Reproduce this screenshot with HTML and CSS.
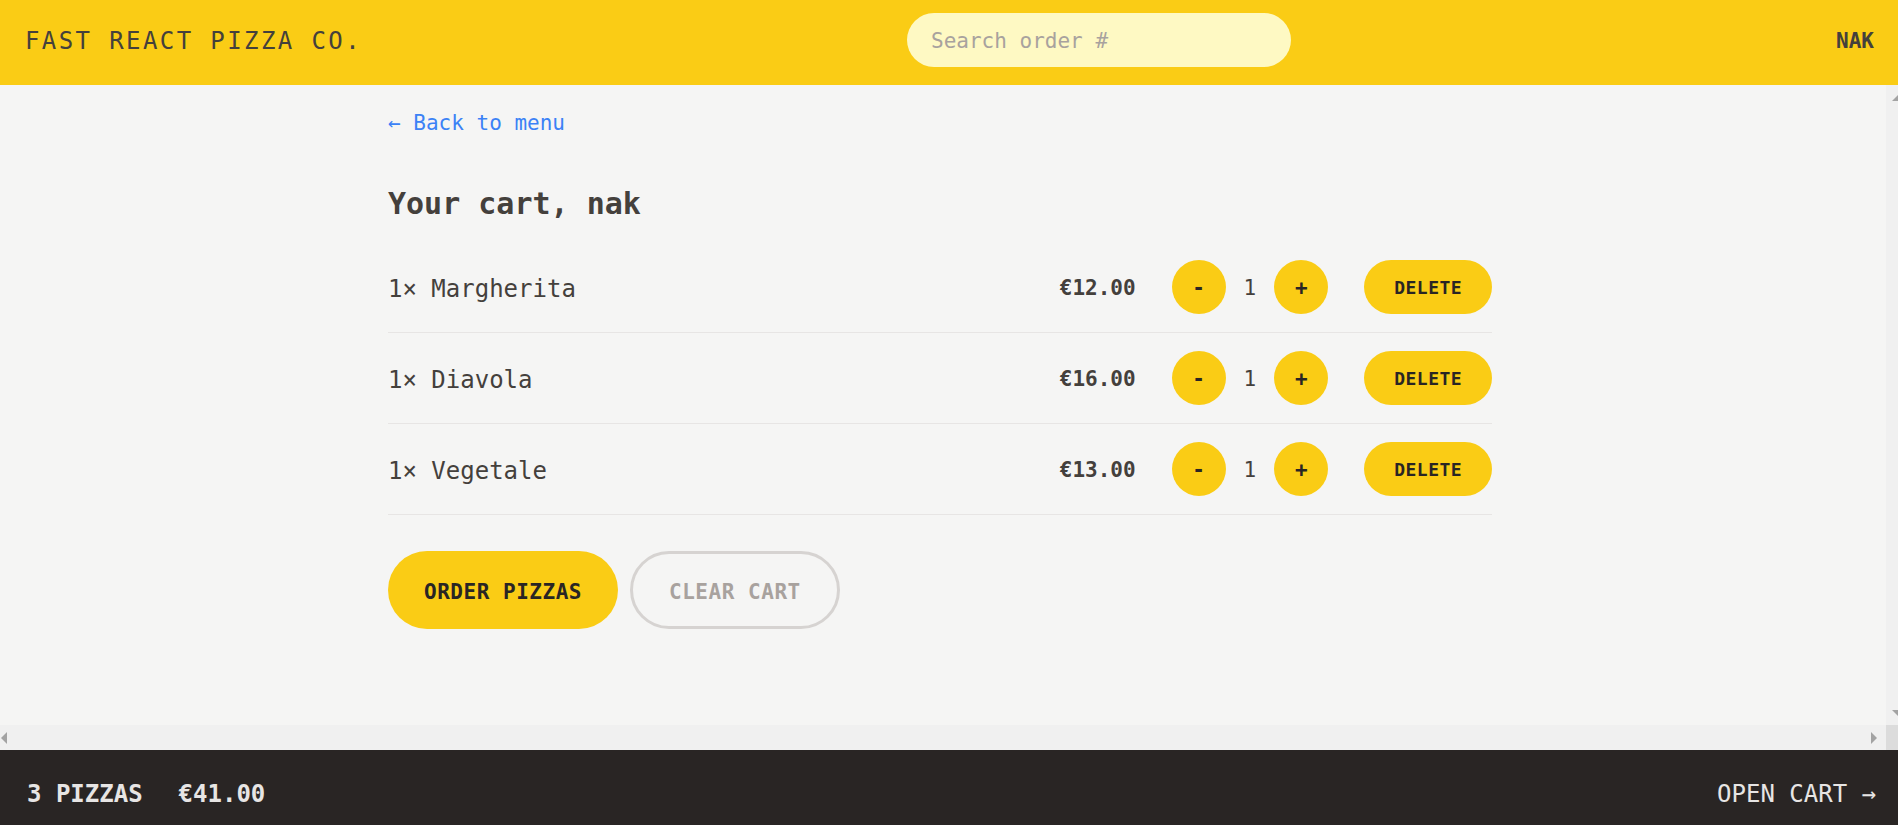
FILE: index.html
```html
<!DOCTYPE html>
<html lang="en">
<head>
<meta charset="utf-8">
<title>Fast React Pizza Co.</title>
<link rel="stylesheet" href="styles.css">
</head>
<body>
  <header class="topbar">
    <a class="logo" href="#">Fast React Pizza Co.</a>
    <form class="search">
      <input class="search-input" type="text" placeholder="Search order #">
    </form>
    <div class="username">nak</div>
  </header>

  <div class="viewport">
    <div class="scroller">
      <main class="cart">
        <div class="back-line"><a class="back" href="#">&larr; Back to menu</a></div>
        <h2 class="cart-title">Your cart, nak</h2>

        <ul class="items">
          <li class="item">
            <p class="item-name">1&times; Margherita</p>
            <div class="item-right">
              <p class="price">€12.00</p>
              <div class="qty">
                <button class="btn round">-</button>
                <span class="qty-num">1</span>
                <button class="btn round">+</button>
              </div>
              <button class="btn small">Delete</button>
            </div>
          </li>
          <li class="item">
            <p class="item-name">1&times; Diavola</p>
            <div class="item-right">
              <p class="price">€16.00</p>
              <div class="qty">
                <button class="btn round">-</button>
                <span class="qty-num">1</span>
                <button class="btn round">+</button>
              </div>
              <button class="btn small">Delete</button>
            </div>
          </li>
          <li class="item">
            <p class="item-name">1&times; Vegetale</p>
            <div class="item-right">
              <p class="price">€13.00</p>
              <div class="qty">
                <button class="btn round">-</button>
                <span class="qty-num">1</span>
                <button class="btn round">+</button>
              </div>
              <button class="btn small">Delete</button>
            </div>
          </li>
        </ul>

        <div class="actions">
          <button class="btn primary">Order pizzas</button>
          <button class="btn secondary">Clear cart</button>
        </div>
      </main>
    </div>

    <div class="vbar" aria-hidden="true">
      <span class="sb-btn sb-up"><span class="tri tri-up"></span></span>
      <span class="sb-btn sb-down"><span class="tri tri-down"></span></span>
    </div>
    <div class="hbar" aria-hidden="true">
      <span class="sb-btn sb-left"><span class="tri tri-left"></span></span>
      <span class="sb-btn sb-right"><span class="tri tri-right"></span></span>
    </div>
    <div class="corner" aria-hidden="true"></div>
  </div>

  <footer class="overview">
    <p class="overview-left">
      <span>3 pizzas</span>
      <span>€41.00</span>
    </p>
    <a class="open-cart" href="#">Open cart &rarr;</a>
  </footer>
</body>
</html>
```

FILE: styles.css
```css
* {
  box-sizing: border-box;
}

html, body {
  margin: 0;
  padding: 0;
}

body {
  height: 100vh;
  display: flex;
  flex-direction: column;
  overflow: hidden;
  font-family: "DejaVu Sans Mono", "Liberation Mono", monospace;
  color: #44403c;
  background: #f5f5f4;
}

p {
  margin: 0;
}

a {
  text-decoration: none;
  color: inherit;
}

button {
  font-family: inherit;
  border: none;
  cursor: pointer;
}

/* ---------- Header ---------- */
.topbar {
  flex: 0 0 85px;
  height: 85px;
  display: flex;
  align-items: center;
  justify-content: space-between;
  padding: 14px 24px 17px 25px;
  background: #facc15;
  text-transform: uppercase;
}

.logo {
  font-size: 24px;
  line-height: 36px;
  letter-spacing: 0.1em;
  color: #44403c;
}

.search {
  margin: 0 0 2px;
}

.search-input {
  display: block;
  width: 384px;
  height: 54px;
  border: none;
  outline: none;
  border-radius: 9999px;
  background: #fef9c3;
  padding: 2px 24px 0;
  font-family: inherit;
  font-size: 21px;
  color: #44403c;
}

.search-input::placeholder {
  color: #a8a29e;
}

.username {
  font-size: 21px;
  line-height: 30px;
  font-weight: 700;
  color: #44403c;
}

/* ---------- Viewport with scrollbars ---------- */
.viewport {
  flex: 1 1 auto;
  min-height: 0;
  display: grid;
  grid-template-columns: 1fr 12px;
  grid-template-rows: 1fr 25px;
}

.scroller {
  min-height: 0;
  overflow: hidden;
  padding-right: 6px;
  background: #f5f5f4;
}

.vbar {
  display: flex;
  flex-direction: column;
  justify-content: space-between;
  background: #f0f0f0;
  overflow: hidden;
}

.hbar {
  display: flex;
  justify-content: space-between;
  background: #f0f0f0;
  overflow: hidden;
}

.corner {
  background: #dcdcdc;
}

.sb-btn {
  display: flex;
  align-items: center;
  flex: 0 0 auto;
}

.sb-up,
.sb-down {
  height: 25px;
  width: 12px;
  padding-left: 6px;
}

.sb-left {
  width: 16px;
  height: 25px;
  padding-left: 1px;
}

.sb-right {
  width: 25px;
  height: 25px;
  padding-left: 10px;
}

.tri {
  display: block;
  width: 0;
  height: 0;
  flex: 0 0 auto;
}

.tri-up {
  border-left: 6px solid transparent;
  border-right: 6px solid transparent;
  border-bottom: 6px solid #a3a3a3;
}

.tri-down {
  border-left: 6px solid transparent;
  border-right: 6px solid transparent;
  border-top: 6px solid #a3a3a3;
}

.tri-left {
  border-top: 6px solid transparent;
  border-bottom: 6px solid transparent;
  border-right: 6px solid #a3a3a3;
}

.tri-right {
  border-top: 6px solid transparent;
  border-bottom: 6px solid transparent;
  border-left: 6px solid #a3a3a3;
}

/* ---------- Cart ---------- */
.cart {
  max-width: 1152px;
  margin: 0 auto;
  padding: 19px 24px 18px;
}

.back-line {
  font-size: 24px;
  line-height: 36px;
}

.back {
  font-size: 21px;
  color: #3b82f6;
}

.cart-title {
  margin: 42px 0 0;
  font-size: 30px;
  line-height: 42px;
  font-weight: 700;
  color: #44403c;
}

.items {
  list-style: none;
  margin: 17px 0 0;
  padding: 0;
  border-bottom: 1px solid #e7e5e4;
}

.item {
  display: flex;
  align-items: center;
  justify-content: space-between;
  padding: 18px 0;
}

.item + .item {
  border-top: 1px solid #e7e5e4;
}

.item-name {
  font-size: 24px;
  line-height: 36px;
  padding-top: 3px;
}

.item-right {
  display: flex;
  align-items: center;
  gap: 36px;
}

.price {
  font-size: 21px;
  line-height: 30px;
  font-weight: 700;
  padding-top: 2px;
}

.qty {
  display: flex;
  align-items: center;
  gap: 18px;
}

.qty-num {
  font-size: 21px;
  line-height: 30px;
  padding-top: 2px;
}

.btn {
  display: inline-block;
  border-radius: 9999px;
  background: #facc15;
  color: #292524;
  font-weight: 700;
  text-transform: uppercase;
  letter-spacing: 0.025em;
}

.round {
  width: 54px;
  height: 54px;
  padding: 2px 0 0;
  font-size: 21px;
  line-height: 30px;
  letter-spacing: 0;
}

.small {
  height: 54px;
  padding: 2px 30px 0;
  font-size: 18px;
  line-height: 24px;
}

.actions {
  display: flex;
  gap: 12px;
  margin-top: 36px;
}

.primary {
  height: 78px;
  padding: 3px 36px 0;
  font-size: 21px;
  line-height: 30px;
}

.secondary {
  height: 78px;
  padding: 3px 36px 0;
  font-size: 21px;
  line-height: 30px;
  background: transparent;
  border: 3px solid #d6d3d1;
  color: #a8a29e;
}

/* ---------- Footer overview ---------- */
.overview {
  flex: 0 0 75px;
  height: 75px;
  overflow: hidden;
  display: flex;
  align-items: flex-start;
  justify-content: space-between;
  padding: 26px 22px 0 27px;
  background: #292524;
  color: #e7e5e4;
  text-transform: uppercase;
  font-size: 24px;
  line-height: 36px;
}

.overview-left {
  display: flex;
  gap: 36px;
  font-weight: 700;
}

.open-cart {
  color: #e7e5e4;
}
```
